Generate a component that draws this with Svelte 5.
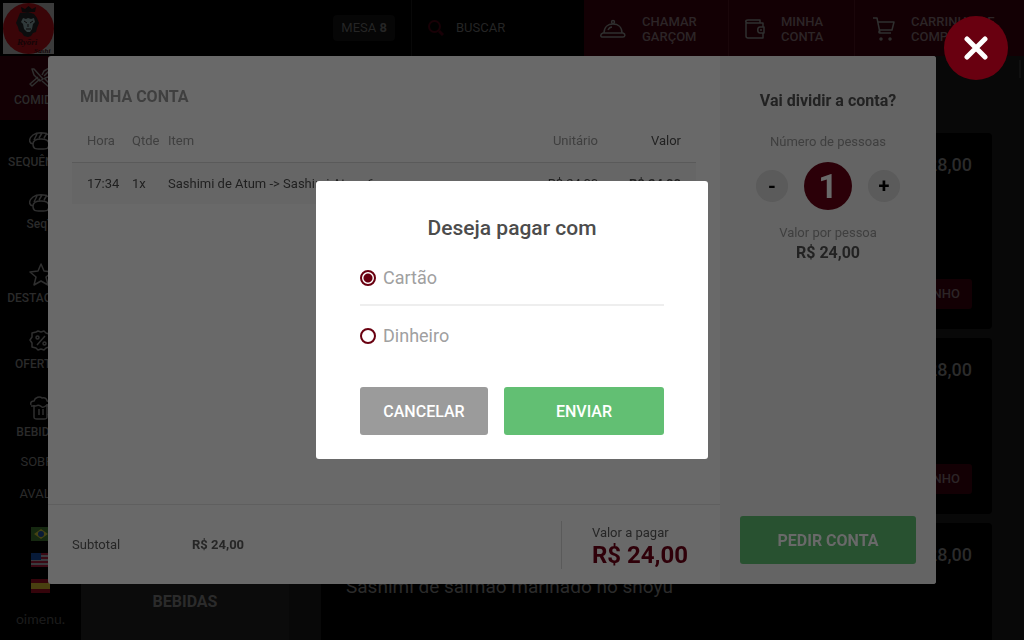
<script>
	let people = 1;
	let payment = "card";

	const total = 24;

	const categories = [
		{ label: "COMIDAS", icon: "cutlery", height: 20, active: true },
		{ label: "SEQUÊNCIA", icon: "sushi", height: 18 },
		{ label: "SeqT", icon: "sushi", height: 18 },
		{ label: "DESTAQUES", icon: "star", height: 30 },
		{ label: "OFERTAS", icon: "offer", height: 22 },
		{ label: "BEBIDAS", icon: "beer", height: 24 },
	];

	const dishes = [
		{ price: 28, name: "", size: "large" },
		{ price: 28, name: "", size: "medium" },
		{ price: 28, name: "Sashimi de salmão marinado no shoyu", size: "large" },
	];

	const orders = [
		{ time: "17:34", amount: 1, item: "Sashimi de Atum -> Sashimi Atum 6un", price: 24 },
	];

	let money = value => "R$ " + value.toFixed(2).replace(".", ",");
	let remove = () => {
		if (people > 1) people -= 1;
	};
	let add = () => (people += 1);
</script>

<div class="page">
	<header>
		<div class="brand">
			<svg class="logo" viewBox="0 0 51 51" aria-label="Ryōri Sushi">
				<rect width="51" height="51" fill="#3b3b3b" />
				<circle cx="25.5" cy="25.5" r="25.5" fill="#3a0508" />
				<path d="M19 9l-1-5 4 2 3.500-3 3.500 3 4-2-1 5z" fill="#0b0809" />
				<path d="M25 9l6 2 3 4 2 5-2 5-1 4-3 1-2 3-3 1-4-1-2-3-3-2-1-4-2-4 2-5 2-5z" fill="#0b0c0d" />
				<path d="M20 15l3 1 2-1 3 1 3-1 1 4-2 2-1 5-2 3h-3l-3-3-1-5-2-2z" fill="#30393a" />
				<path d="M21 18l3 2M30 18l-3 2M23 26h5M25 21v3" stroke="#0b0809" fill="none" />
				<text x="14" y="42" class="logoText">Ryōri</text>
				<text x="31" y="50" class="logoSmall">Sushi</text>
			</svg>
			<span class="mesa">MESA <b>8</b></span>
		</div>
		<a class="search" href="#buscar">
			<svg width="16" height="16" viewBox="0 0 16 16" fill="none" stroke="#180006" stroke-width="2">
				<circle cx="6.500" cy="6.500" r="5.500" />
				<path d="M11 11l4 4" stroke-width="3" />
			</svg>
			BUSCAR
		</a>
		<nav>
			<a class="call" href="#garcom">
				<svg width="26" height="20" viewBox="0 0 26 20">
					<circle cx="13" cy="3" r="1.500" />
					<path d="M4 14C4 8 8 5 13 5s9 3 9 9M8 11c1-2 2-3 4-3M3 14h20c3 1 2 4 0 4H3c-3 0-3-3 0-4z" />
				</svg>
				<span>CHAMAR GARÇOM</span>
			</a>
			<a class="account" href="#conta">
				<svg width="20" height="20" viewBox="0 0 20 20">
					<path d="M18 8V4H3C0 4 0 1 3 1h12v3M1 2v15c0 1 1 2 2 2h15v-5M19 8h-4c-3 0-3 6 0 6h4zM16 10v2" />
				</svg>
				<span>MINHA CONTA</span>
			</a>
			<a class="cart" href="#carrinho">
				<svg width="22" height="24" viewBox="0 0 22 24">
					<path d="M0 1h4l3 15h11M5 5h16l-2 8H6M7 13c-2 2-1 3 0 3" />
					<circle cx="8" cy="22" r="1" />
					<circle cx="17" cy="22" r="1" />
				</svg>
				<span>CARRINHO DE COMPRAS</span>
			</a>
		</nav>
	</header>

	<div class="content">
		<aside>
			{#each categories as category}
				<a class="category" class:active={category.active} href="#categoria">
					<svg width="24" height={category.height} viewBox="0 {24 - category.height} 24 {category.height}">
						{#if category.icon === "cutlery"}
							<path d="M3 5l2 0 9 10-3 2-6-6zM13 17l7 6 2-2-7-7M11 15l-8 7-2-2 8-7M13 11l2-4 5-3M15 12l5-5M16 14l3-1 4-5" />
						{:else if category.icon === "sushi"}
							<path d="M4 18c-5-1-4-6 0-9 4-3 12-3 16 0 4 3 4 8 0 9M4 18c0-4 3-5 8-5s8 1 8 5c0 5-2 5-8 5s-8 0-8-5zM5 14l3-6M10 12l3-5M15 12l3-5" />
						{:else if category.icon === "star"}
							<path d="M12 2l3 7 8 1-6 5 2 8-7-4-7 4 2-8-6-5 8-1z" />
						{:else if category.icon === "offer"}
							<path d="M9 3l3 1 3-1 2 2 3 1 1 3 2 3-2 3-1 4-3 1-2 2-3-1-3 1-2-2-4-1v-4l-2-3 2-3v-4l4-1zM16 8l-8 9" />
							<circle cx="8.500" cy="9.500" r="1.500" />
							<circle cx="15.500" cy="15.500" r="1.500" />
						{:else}
							<path d="M5 9v12c0 2 1 2 3 2h7c2 0 3 0 3-2V8M2 9c-1-3 1-4 3-4 1-4 6-5 8-3 3-1 5 1 5 3 3 0 3 3 1 4-3 0-3 3-6 2-2-1-3-3-6-1H2M18 10h3c2 0 2 9-3 9M10 13v6M14 13v6" />
						{/if}
					</svg>
					{category.label}
				</a>
			{/each}
			<a class="link" href="#sobre">SOBRE</a>
			<a class="link" href="#avalie">AVALIE</a>
			<div class="flags">
				<svg viewBox="0 0 19 14">
					<rect width="19" height="14" fill="#152810" />
					<path d="M10 2l7 5-7 5-7-5z" fill="#454313" />
					<circle cx="10" cy="7" r="3" fill="#0a1b36" />
				</svg>
				<svg viewBox="0 0 19 14">
					<rect width="19" height="14" fill="#3a3a3e" />
					<path d="M0 1h19M0 5h19M0 9h19M0 13h19" stroke="#3a0914" stroke-width="2" />
					<rect width="10" height="7" fill="#071a38" />
				</svg>
				<svg viewBox="0 0 19 14">
					<rect width="19" height="14" fill="#35040b" />
					<rect y="4" width="19" height="6" fill="#494010" />
				</svg>
			</div>
			<span class="oimenu">oimenu.</span>
		</aside>
		<div class="submenu">
			<a href="#bebidas">BEBIDAS</a>
		</div>
		<main>
			{#each dishes as dish}
				<article class={dish.size}>
					<strong>{money(dish.price)}</strong>
					{#if dish.name}
						<p>{dish.name}</p>
					{:else}
						<button>CARRINHO</button>
					{/if}
				</article>
			{/each}
		</main>
		<div class="scroll"></div>
	</div>
</div>

<div class="overlay">
	<section class="bill">
		<div class="left">
			<h1>MINHA CONTA</h1>
			<table>
				<thead>
					<tr>
						<th class="time">Hora</th>
						<th class="amount">Qtde</th>
						<th>Item</th>
						<th class="unit">Unitário</th>
						<th class="value">Valor</th>
					</tr>
				</thead>
				<tbody>
					{#each orders as order}
						<tr>
							<td>{order.time}</td>
							<td>{order.amount}x</td>
							<td>{order.item}</td>
							<td class="unit">{money(order.price)}</td>
							<td class="value">{money(order.amount * order.price)}</td>
						</tr>
					{/each}
				</tbody>
			</table>
			<footer>
				<span class="subtotal">Subtotal</span>
				<b>{money(total)}</b>
				<div class="due">
					<span>Valor a pagar</span>
					<strong>{money(total)}</strong>
				</div>
			</footer>
		</div>
		<div class="split">
			<h2>Vai dividir a conta?</h2>
			<p>Número de pessoas</p>
			<div class="stepper">
				<button aria-label="Menos pessoas" on:click={remove}>-</button>
				<output>{people}</output>
				<button aria-label="Mais pessoas" on:click={add}>+</button>
			</div>
			<p class="each">Valor por pessoa</p>
			<strong>{money(total / people)}</strong>
			<button class="order">PEDIR CONTA</button>
		</div>
	</section>
	<button class="close" aria-label="Fechar">
		<svg width="24" height="24" viewBox="0 0 24 24">
			<path d="M3 3l18 18M21 3L3 21" />
		</svg>
	</button>
</div>

<div class="overlay center">
	<form class="dialog" on:submit|preventDefault>
		<h2>Deseja pagar com</h2>
		<label>
			<input type="radio" name="payment" value="card" bind:group={payment} />
			Cartão
		</label>
		<label>
			<input type="radio" name="payment" value="cash" bind:group={payment} />
			Dinheiro
		</label>
		<div class="actions">
			<button type="button" class="cancel">CANCELAR</button>
			<button type="submit" class="send">ENVIAR</button>
		</div>
	</form>
</div>

<style>
	* {
		box-sizing: border-box;
		margin: 0;
		padding: 0;
	}

	:global(body) {
		background: #080808;
		font-family: Roboto, "Liberation Sans", sans-serif;
		font-size: 13px;
		line-height: 16px;
	}

	button {
		border: 0;
		border-radius: 3px;
		font: inherit;
		font-weight: 500;
		cursor: pointer;
	}

	a {
		color: #2b2b2b;
		text-decoration: none;
	}

	.page {
		height: 100vh;
		display: flex;
		flex-direction: column;
		overflow: hidden;
	}

	header {
		height: 56px;
		flex: none;
		display: flex;
		background: #000;
	}

	.brand {
		flex: 1;
		display: flex;
		justify-content: space-between;
		align-items: center;
		padding: 0 16px 0 3px;
		border-right: 1px solid #080808;
	}

	.logo {
		width: 51px;
		height: 51px;
	}

	.logoText {
		font: italic 700 9px "Liberation Serif", serif;
		fill: #130406;
	}

	.logoSmall {
		font: italic 700 7px "Liberation Serif", serif;
		fill: #130406;
	}

	.mesa {
		padding: 5px 8px;
		border-radius: 4px;
		background: #060606;
		color: #252525;
	}

	.search {
		width: 172px;
		display: flex;
		align-items: center;
		gap: 12px;
		padding-left: 16px;
		color: #252525;
	}

	nav {
		display: flex;
		background: #130004;
	}

	nav a {
		display: flex;
		align-items: center;
		gap: 16px;
		padding: 1px 16px 0;
		font-weight: 500;
		line-height: 15px;
		color: #2c2527;
		border-right: 1px solid #1a060a;
	}

	nav svg,
	.category svg {
		flex: none;
		fill: none;
		stroke: #2f2f2f;
		stroke-width: 1.5;
		stroke-linejoin: round;
	}

	.call {
		width: 145px;
	}

	.account {
		width: 126px;
	}

	nav .cart {
		width: 169px;
		padding-left: 18px;
		border: 0;
	}

	.content {
		flex: 1;
		min-height: 0;
		display: flex;
	}

	aside {
		width: 81px;
		flex: none;
		display: flex;
		flex-direction: column;
		align-items: center;
		background: #000;
	}

	.category {
		width: 100%;
		display: flex;
		flex-direction: column;
		align-items: center;
		gap: 4px;
		padding: 12px 0;
		font-size: 12px;
		font-weight: 500;
	}

	.active {
		background: #130004;
	}

	.link {
		line-height: 20px;
		margin-bottom: 12px;
	}

	.flags {
		display: flex;
		flex-direction: column;
		gap: 12px;
		padding: 11px 0 18px;
	}

	.flags svg {
		width: 19px;
		height: 14px;
	}

	.oimenu {
		font-family: Lato, sans-serif;
		font-size: 14px;
		color: #1c1c1c;
	}

	.submenu {
		width: 208px;
		flex: none;
		display: flex;
		flex-direction: column;
		justify-content: flex-end;
		align-items: center;
		padding-bottom: 30px;
		background: #0b0b0b;
		font-size: 16px;
		font-weight: 700;
	}

	main {
		flex: 1;
		display: flex;
		flex-direction: column;
		gap: 9px;
		padding: 77px 0 0 32px;
	}

	article {
		flex: none;
		display: flex;
		flex-direction: column;
		align-items: flex-end;
		padding: 20px;
		border-radius: 4px;
		background: #000;
	}

	.large {
		height: 196px;
	}

	.medium {
		height: 176px;
	}

	article strong {
		font-size: 18px;
		font-weight: 500;
		line-height: 24px;
		color: #2b2b2b;
	}

	article p {
		align-self: flex-start;
		padding: 8px 5px;
		font-size: 19px;
		line-height: 24px;
		color: #2b2b2b;
	}

	article button {
		margin-top: auto;
		padding: 7px 12px;
		background: #130004;
		color: #2c2527;
	}

	.scroll {
		width: 2px;
		height: 18px;
		margin: 4px 3px 0 27px;
		background: #101010;
	}

	.overlay {
		position: fixed;
		inset: 0;
		padding: 56px 88px 56px 48px;
	}

	.center {
		display: grid;
		place-items: center;
		padding: 0;
	}

	.bill {
		height: 100%;
		display: flex;
		border-radius: 3px;
		overflow: hidden;
		background: #696969;
	}

	.left {
		flex: 1;
		display: flex;
		flex-direction: column;
		padding: 29px 24px 0;
	}

	h1 {
		padding: 0 8px 11px;
		font-size: 16px;
		font-weight: 700;
		line-height: 24px;
		color: #3f3f3f;
	}

	table {
		border-collapse: collapse;
		table-layout: fixed;
		width: 100%;
	}

	th,
	td {
		height: 42px;
		text-align: left;
		color: #1f1f1f;
	}

	td {
		padding-top: 2px;
	}

	th {
		font-weight: 400;
		border-bottom: 1px solid #5a5a5a;
		color: #3f3f3f;
	}

	tbody tr {
		background: #666;
	}

	th:first-child,
	td:first-child {
		padding-left: 15px;
	}

	.time {
		width: 60px;
	}

	.amount {
		width: 36px;
	}

	.unit {
		width: 88px;
		text-align: right;
	}

	.value {
		width: 98px;
		padding-right: 15px;
		text-align: right;
		color: #222;
	}

	td.value {
		font-weight: 700;
	}

	footer {
		height: 80px;
		display: flex;
		align-items: center;
		margin: auto -24px 0;
		padding: 0 24px;
		border-top: 1px solid #5f5f5f;
		color: #262626;
	}

	.subtotal {
		width: 120px;
	}

	.due {
		display: flex;
		flex-direction: column;
		margin-left: auto;
		padding: 4px 8px 0 30px;
		border-left: 1px solid #5a5a5a;
	}

	.due strong {
		font-size: 24px;
		line-height: 28px;
		color: #2f0009;
	}

	.split {
		width: 216px;
		flex: none;
		display: flex;
		flex-direction: column;
		align-items: center;
		padding: 33px 20px 20px;
		background: #646464;
		color: #222;
	}

	.split h2,
	.split strong {
		font-size: 16px;
		font-weight: 700;
		line-height: 24px;
	}

	.split p {
		padding: 21px 0 12px;
		color: #3f3f3f;
	}

	.split .each {
		padding: 15px 0 0;
	}

	.stepper {
		display: flex;
		align-items: center;
		gap: 16px;
	}

	.stepper button {
		width: 32px;
		height: 32px;
		border-radius: 50%;
		background: #5b5b5b;
		font-size: 20px;
		font-weight: 700;
		color: #000;
	}

	output {
		width: 48px;
		height: 48px;
		border-radius: 50%;
		background: #2b0008;
		font-size: 34px;
		font-weight: 700;
		line-height: 48px;
		text-align: center;
		color: #696969;
	}

	.order {
		width: 100%;
		height: 48px;
		margin-top: auto;
		padding-top: 2px;
		background: #285130;
		font-size: 16px;
		font-weight: 700;
		color: #696969;
	}

	.close {
		position: absolute;
		top: 16px;
		right: 16px;
		width: 64px;
		height: 64px;
		display: grid;
		place-items: center;
		border-radius: 50%;
		background: #690010;
	}

	.close svg {
		fill: none;
		stroke: #fff;
		stroke-width: 5;
		stroke-linecap: round;
	}

	.dialog {
		width: 392px;
		padding: 35px 44px 24px;
		border-radius: 3px;
		background: #fff;
	}

	.dialog h2 {
		margin-bottom: 9px;
		font-size: 21px;
		font-weight: 500;
		line-height: 24px;
		text-align: center;
		color: #4c4c4c;
	}

	label {
		height: 57px;
		display: flex;
		align-items: center;
		gap: 7px;
		padding-top: 2px;
		font-size: 18px;
		color: #a0a0a0;
	}

	label:first-of-type {
		border-bottom: 2px solid #eee;
	}

	input {
		appearance: none;
		width: 16px;
		height: 16px;
		border: 2px solid #690010;
		border-radius: 50%;
	}

	input:checked {
		background: radial-gradient(#690010 4px, transparent 5px);
	}

	.actions {
		display: grid;
		grid-template-columns: 4fr 5fr;
		gap: 16px;
		margin-top: 24px;
	}

	.actions button {
		height: 48px;
		padding-top: 2px;
		font-size: 16px;
		color: #fff;
	}

	.cancel {
		background: #9b9b9b;
	}

	.send {
		background: #62bf73;
	}
</style>
